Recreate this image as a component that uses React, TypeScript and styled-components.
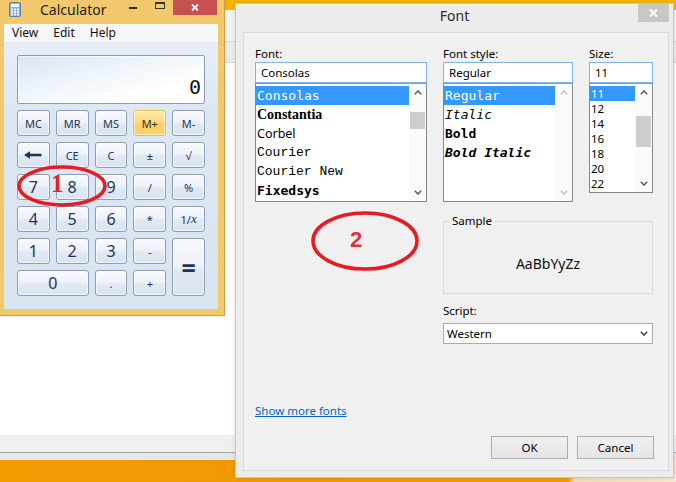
import React from "react";
import styled, { createGlobalStyle } from "styled-components";

const GlobalStyle = createGlobalStyle`
  html, body { margin: 0; padding: 0; }
  body {
    width: 676px; height: 482px; overflow: hidden; background: #fff;
    font-family: "Noto Sans", "Segoe UI", sans-serif;
  }
  * { box-sizing: border-box; }
`;

const UI = `"Noto Sans", "Open Sans", sans-serif`;
const MONO = `"DejaVu Sans Mono", "Liberation Mono", monospace`;

/* ---------- desktop & back window ---------- */
const Desktop = styled.div`
  position: relative;
  width: 676px;
  height: 482px;
  overflow: hidden;
  display: flex;
  flex-direction: column;
`;
const BackWindow = styled.div`
  flex: 1;
  display: flex;
  flex-direction: column;
  background: #fff;
`;
const BackTitle = styled.div`
  height: 10px;
  background: #f8b500;
`;
const BackRibbon = styled.div<{ $h: number; $bg: string }>`
  height: ${(p) => p.$h}px;
  background: ${(p) => p.$bg};
  border-bottom: 1px solid #d8d8d8;
`;
const BackContent = styled.div`
  flex: 1;
  background: #fff;
`;
const BackStatus = styled.div`
  height: 18px;
  background: #f0f0f0;
  border-bottom: 1px solid #a3a3a3;
`;
const BackFooter = styled.div`
  height: 7px;
  background: #e6e6e6;
`;
const Taskbar = styled.div`
  height: 22px;
  background: linear-gradient(90deg, #f29a00 0%, #f09800 84%, #f2dcb6 85%, #f6e8d0 100%);
`;

/* ---------- calculator ---------- */
const CalcWindow = styled.div`
  position: absolute;
  left: 0;
  top: 0;
  width: 225px;
  height: 316px;
  background: #f1c86b;
  border-right: 1px solid #c9a24e;
  border-bottom: 1px solid #c9a24e;
  display: flex;
  flex-direction: column;
  box-shadow: 1px 1px 3px rgba(0, 0, 0, 0.1);
`;
const CalcTitleBar = styled.div`
  height: 24px;
  flex-shrink: 0;
  display: flex;
  align-items: flex-start;
`;
const AppIcon = styled.svg`
  margin: 2px 0 0 9px;
  flex-shrink: 0;
`;
const CalcTitle = styled.div`
  margin-left: 19px;
  font: 14px/20px ${UI};
  color: #1e1e1e;
`;
const WinControls = styled.div`
  margin-left: auto;
  margin-right: 7px;
  display: flex;
  align-items: flex-start;
`;
const MinButton = styled.div`
  width: 22px;
  height: 15px;
  margin-right: 4px;
  display: flex;
  justify-content: center;
  padding-top: 7px;
`;
const MinGlyph = styled.div`
  width: 8px;
  height: 2px;
  background: #2a2a2a;
`;
const MaxButton = styled.div`
  width: 24px;
  height: 15px;
  margin-right: 1px;
  display: flex;
  justify-content: center;
  padding-top: 2px;
`;
const MaxGlyph = styled.div`
  width: 10px;
  height: 7px;
  border: 1px solid #333;
  border-top-width: 2px;
`;
const CloseButton = styled.div<{ $w: number; $h: number; $bg: string }>`
  width: ${(p) => p.$w}px;
  height: ${(p) => p.$h}px;
  background: ${(p) => p.$bg};
  display: flex;
  align-items: center;
  justify-content: center;
`;
const CalcInner = styled.div`
  flex: 1;
  margin: 0 6px 6px 4px;
  display: flex;
  flex-direction: column;
`;
const MenuBar = styled.div`
  height: 19px;
  flex-shrink: 0;
  display: flex;
  align-items: center;
  gap: 15px;
  padding-left: 8px;
  background: #f6f7f9;
  border-bottom: 1px solid #e2e7ee;
  font: 12px/18px ${UI};
  color: #111;
`;
const MenuItem = styled.span``;
const CalcBody = styled.div`
  flex: 1;
  padding: 12px 13px 13px 13px;
  display: flex;
  flex-direction: column;
  gap: 6px;
  background: linear-gradient(180deg, #e8eef7 0%, #dde7f2 25%, #d9e4f1 100%);
`;
const Display = styled.div`
  height: 49px;
  border: 1px solid #8d9bb0;
  border-radius: 2px;
  background: linear-gradient(165deg, #d9e5f3 0%, #eef4fa 40%, #ffffff 75%);
  box-shadow: inset 0 0 0 1px rgba(255, 255, 255, 0.6);
  display: flex;
  align-items: flex-end;
  justify-content: flex-end;
  padding: 0 3px 6px 0;
  font: 20px/20px ${MONO};
  color: #111;
`;
const KeyGrid = styled.div`
  display: grid;
  grid-template-columns: repeat(5, 1fr);
  grid-auto-rows: 26px;
  gap: 6px;
`;
const Key = styled.div<{ $digit?: boolean; $hot?: boolean; $wide?: boolean; $tall?: boolean }>`
  grid-column: ${(p) => (p.$wide ? "span 2" : "auto")};
  grid-row: ${(p) => (p.$tall ? "span 2" : "auto")};
  border: 1px solid ${(p) => (p.$hot ? "#e6c24c" : "#8d9db3")};
  border-radius: 3px;
  background: ${(p) =>
    p.$hot
      ? "linear-gradient(180deg, #fde9ad 0%, #fcd97e 45%, #fbcf63 55%, #fbd36c 100%)"
      : "linear-gradient(180deg, #f6f9fc 0%, #eef3f9 45%, #e0e8f2 55%, #dbe4ef 100%)"};
  box-shadow: inset 0 0 0 1px rgba(255, 255, 255, 0.55);
  display: flex;
  align-items: center;
  justify-content: center;
  font-family: ${UI};
  font-size: ${(p) => (p.$digit ? "16px" : "11px")};
  color: ${(p) => (p.$hot ? "#3a3020" : "#1e3656")};
`;
const EqualsGlyph = styled.span`
  font: bold 25px/24px ${UI};
  color: #1e3656;
`;
const Ital = styled.span`
  font-family: "Liberation Serif", serif;
  font-style: italic;
  font-size: 13px;
`;

/* ---------- font dialog ---------- */
const FontDialog = styled.div`
  position: absolute;
  left: 235px;
  top: 3px;
  width: 439px;
  height: 475px;
  background: #ececec;
  border: 1px solid #c6c6c6;
  box-shadow: 0 0 5px rgba(0, 0, 0, 0.12);
  display: flex;
  flex-direction: column;
  font-family: ${UI};
`;
const DialogTitleBar = styled.div`
  height: 28px;
  flex-shrink: 0;
  display: grid;
  grid-template-columns: 1fr auto 1fr;
  align-items: start;
`;
const DialogTitle = styled.div`
  grid-column: 2;
  font: 14px/23px ${UI};
  color: #2a2a2a;
`;
const DialogClose = styled(CloseButton)`
  grid-column: 3;
  justify-self: end;
  margin: -1px 4px 0 0;
`;
const Panel = styled.div`
  flex: 1;
  margin: 0 4px 6px 7px;
  background: #f0f0f0;
  border: 1px solid #dadada;
  padding: 13px 14px 11px 11px;
  display: flex;
  flex-direction: column;
`;
const FieldGrid = styled.div`
  display: grid;
  grid-template-columns: 172px 130px 64px;
  column-gap: 16px;
  align-items: start;
`;
const Label = styled.div<{ $span?: boolean; $mt?: number }>`
  grid-column: ${(p) => (p.$span ? "2 / 4" : "auto")};
  margin-top: ${(p) => p.$mt ?? 0}px;
  font-size: 11.5px;
  line-height: 16px;
  color: #000;
`;
const TextInput = styled.div`
  height: 21px;
  border: 1px solid #7eb4ea;
  background: #fff;
  padding-left: 5px;
  display: flex;
  align-items: center;
  font-size: 11.5px;
  color: #000;
`;
const ListBox = styled.div<{ $h: number }>`
  height: ${(p) => p.$h}px;
  border: 1px solid #828790;
  border-top-color: #9a9a9a;
  background: #fff;
  display: flex;
`;
const ListItems = styled.div`
  flex: 1;
  min-width: 0;
  padding-top: 2px;
  overflow: hidden;
`;
const ListItem = styled.div<{
  $sel?: boolean;
  $h: number;
  $family: string;
  $size: number;
  $bold?: boolean;
  $italic?: boolean;
}>`
  height: ${(p) => p.$h}px;
  line-height: ${(p) => p.$h}px;
  padding-left: 1px;
  white-space: nowrap;
  font-family: ${(p) => p.$family};
  font-size: ${(p) => p.$size}px;
  font-weight: ${(p) => (p.$bold ? 700 : 400)};
  font-style: ${(p) => (p.$italic ? "italic" : "normal")};
  color: ${(p) => (p.$sel ? "#fff" : "#000")};
  background: ${(p) => (p.$sel ? "#3399ff" : "transparent")};
`;
const ScrollBar = styled.div`
  width: 17px;
  flex-shrink: 0;
  display: flex;
  flex-direction: column;
  background: #fafafa;
`;
const ScrollArrow = styled.div`
  height: 17px;
  flex-shrink: 0;
  display: flex;
  align-items: center;
  justify-content: center;
`;
const Track = styled.div`
  flex: 1;
`;
const Thumb = styled.div<{ $top: number; $h: number }>`
  margin: ${(p) => p.$top}px 1px 0 1px;
  height: ${(p) => p.$h}px;
  background: #cdcdcd;
`;
const SampleGroup = styled.div`
  grid-column: 2 / 4;
  margin-top: 19px;
  height: 73px;
  position: relative;
  border: 1px solid #dcdcdc;
  padding-top: 11px;
  display: flex;
  align-items: center;
  justify-content: center;
`;
const Legend = styled.span`
  position: absolute;
  top: -9px;
  left: 6px;
  padding: 0 2px;
  background: #f0f0f0;
  font-size: 11.5px;
  line-height: 16px;
  color: #000;
`;
const SampleText = styled.div`
  font-size: 14px;
  color: #111;
`;
const Select = styled.div`
  grid-column: 2 / 4;
  margin-top: 4px;
  height: 21px;
  border: 1px solid #acacac;
  background: #fff;
  padding: 0 4px 0 3px;
  display: flex;
  align-items: center;
  justify-content: space-between;
  font-size: 11.5px;
  color: #000;
`;
const Link = styled.a`
  align-self: flex-start;
  margin-top: 59px;
  font-size: 11.5px;
  line-height: 16px;
  color: #0066cc;
  text-decoration: underline;
`;
const ButtonRow = styled.div`
  margin-top: auto;
  display: flex;
  justify-content: flex-end;
  gap: 9px;
`;
const DialogButton = styled.div`
  width: 77px;
  height: 23px;
  border: 1px solid #adadad;
  background: linear-gradient(180deg, #f0f0f0 0%, #e5e5e5 100%);
  display: flex;
  align-items: center;
  justify-content: center;
  font-size: 11.5px;
  color: #000;
`;

/* ---------- annotations ---------- */
const Ring = styled.svg<{ $x: number; $y: number }>`
  position: absolute;
  left: ${(p) => p.$x}px;
  top: ${(p) => p.$y}px;
  overflow: visible;
`;
const Mark = styled.div<{ $x: number; $y: number; $serif?: boolean }>`
  position: absolute;
  left: ${(p) => p.$x}px;
  top: ${(p) => p.$y}px;
  font-family: ${(p) => (p.$serif ? `"Liberation Serif", serif` : `"Liberation Sans", sans-serif`)};
  font-weight: 700;
  font-size: ${(p) => (p.$serif ? 25 : 22)}px;
  line-height: ${(p) => (p.$serif ? 24 : 22)}px;
  color: ${(p) => (p.$serif ? "#e0202a" : "#e5303c")};
`;

/* ---------- small drawings ---------- */
const Chevron = ({ up, color = "#606060" }: { up?: boolean; color?: string }) => (
  <svg width="8" height="5" viewBox="0 0 8 5">
    <polyline
      points={up ? "0.8,4.2 4,1 7.2,4.2" : "0.8,0.8 4,4 7.2,0.8"}
      fill="none"
      stroke={color}
      strokeWidth="1.6"
    />
  </svg>
);

const XGlyph = ({ size = 8 }: { size?: number }) => (
  <svg width={size} height={size - 1} viewBox="0 0 8 7">
    <path d="M1 0.5 L7 6.5 M7 0.5 L1 6.5" stroke="#fff" strokeWidth="1.8" fill="none" />
  </svg>
);

const BackArrow = () => (
  <svg width="18" height="8" viewBox="0 0 18 8">
    <path d="M4 4 H17.5" stroke="#1e3656" strokeWidth="2.6" />
    <polygon points="0,4 6,0.3 6,7.7" fill="#1e3656" />
  </svg>
);

const Scroll = ({
  thumb,
  disabled,
}: {
  thumb?: { top: number; h: number };
  disabled?: boolean;
}) => (
  <ScrollBar>
    <ScrollArrow>
      <Chevron up color={disabled ? "#c4c4c4" : "#606060"} />
    </ScrollArrow>
    <Track>{thumb && <Thumb $top={thumb.top} $h={thumb.h} />}</Track>
    <ScrollArrow>
      <Chevron color={disabled ? "#c4c4c4" : "#606060"} />
    </ScrollArrow>
  </ScrollBar>
);

const fonts = [
  { name: "Consolas", family: MONO, size: 13 },
  { name: "Constantia", family: `"Liberation Serif", serif`, size: 14, bold: true },
  { name: "Corbel", family: UI, size: 12.5 },
  { name: "Courier", family: `"Liberation Mono", monospace`, size: 13 },
  { name: "Courier New", family: `"Liberation Mono", monospace`, size: 13 },
  { name: "Fixedsys", family: MONO, size: 13, bold: true },
];
const styles = [
  { name: "Regular" },
  { name: "Italic", italic: true },
  { name: "Bold", bold: true },
  { name: "Bold Italic", bold: true, italic: true },
];
const sizes = ["11", "12", "14", "16", "18", "20", "22"];

type KeyDef = {
  label: React.ReactNode;
  digit?: boolean;
  hot?: boolean;
  wide?: boolean;
  tall?: boolean;
};
const keys: KeyDef[] = [
  { label: "MC" },
  { label: "MR" },
  { label: "MS" },
  { label: "M+", hot: true },
  { label: "M-" },
  { label: <BackArrow /> },
  { label: "CE" },
  { label: "C" },
  { label: "±" },
  { label: "√" },
  { label: "7", digit: true },
  { label: "8", digit: true },
  { label: "9", digit: true },
  { label: "/" },
  { label: "%" },
  { label: "4", digit: true },
  { label: "5", digit: true },
  { label: "6", digit: true },
  { label: "*" },
  {
    label: (
      <>
        1/<Ital>x</Ital>
      </>
    ),
  },
  { label: "1", digit: true },
  { label: "2", digit: true },
  { label: "3", digit: true },
  { label: "-" },
  { label: <EqualsGlyph>=</EqualsGlyph>, tall: true },
  { label: "0", digit: true, wide: true },
  { label: "." },
  { label: "+" },
];

export default function App() {
  return (
    <>
      <GlobalStyle />
      <Desktop>
        <BackWindow>
          <BackTitle />
          <BackRibbon $h={32} $bg="#f4f4f4" />
          <BackRibbon $h={21} $bg="#ededed" />
          <BackContent />
          <BackStatus />
          <BackFooter />
        </BackWindow>
        <Taskbar />

        <CalcWindow>
          <CalcTitleBar>
            <AppIcon width="12" height="15" viewBox="0 0 12 15">
              <rect x="0.5" y="0.5" width="11" height="14" rx="1" fill="#8eafd3" stroke="#5a7ea6" />
              <rect x="2" y="2" width="8" height="3" fill="#eef5fc" />
              {[0, 1, 2].map((r) =>
                [0, 1, 2].map((c) => (
                  <rect key={`${r}-${c}`} x={2 + c * 3} y={6.5 + r * 2.6} width="2" height="1.8" fill="#f4f8fc" />
                ))
              )}
            </AppIcon>
            <CalcTitle>Calculator</CalcTitle>
            <WinControls>
              <MinButton>
                <MinGlyph />
              </MinButton>
              <MaxButton>
                <MaxGlyph />
              </MaxButton>
              <CloseButton $w={44} $h={15} $bg="#c75050">
                <XGlyph />
              </CloseButton>
            </WinControls>
          </CalcTitleBar>
          <CalcInner>
            <MenuBar>
              <MenuItem>View</MenuItem>
              <MenuItem>Edit</MenuItem>
              <MenuItem>Help</MenuItem>
            </MenuBar>
            <CalcBody>
              <Display>0</Display>
              <KeyGrid>
                {keys.map((k, i) => (
                  <Key key={i} $digit={k.digit} $hot={k.hot} $wide={k.wide} $tall={k.tall}>
                    {k.label}
                  </Key>
                ))}
              </KeyGrid>
            </CalcBody>
          </CalcInner>
        </CalcWindow>

        <FontDialog>
          <DialogTitleBar>
            <DialogTitle>Font</DialogTitle>
            <DialogClose $w={31} $h={19} $bg="#c7c7c7">
              <XGlyph size={9} />
            </DialogClose>
          </DialogTitleBar>
          <Panel>
            <FieldGrid>
              <Label>Font:</Label>
              <Label>Font style:</Label>
              <Label>Size:</Label>

              <TextInput>Consolas</TextInput>
              <TextInput>Regular</TextInput>
              <TextInput>11</TextInput>

              <ListBox $h={119}>
                <ListItems>
                  {fonts.map((f, i) => (
                    <ListItem
                      key={f.name}
                      $sel={i === 0}
                      $h={19}
                      $family={f.family}
                      $size={f.size}
                      $bold={f.bold}
                    >
                      {f.name}
                    </ListItem>
                  ))}
                </ListItems>
                <Scroll thumb={{ top: 11, h: 17 }} />
              </ListBox>
              <ListBox $h={119}>
                <ListItems>
                  {styles.map((s, i) => (
                    <ListItem
                      key={s.name}
                      $sel={i === 0}
                      $h={19}
                      $family={MONO}
                      $size={13}
                      $bold={s.bold}
                      $italic={s.italic}
                    >
                      {s.name}
                    </ListItem>
                  ))}
                </ListItems>
                <Scroll disabled />
              </ListBox>
              <ListBox $h={110}>
                <ListItems>
                  {sizes.map((s, i) => (
                    <ListItem key={s} $sel={i === 0} $h={15} $family={UI} $size={11.5}>
                      {s}
                    </ListItem>
                  ))}
                </ListItems>
                <Scroll thumb={{ top: 15, h: 31 }} />
              </ListBox>

              <SampleGroup>
                <Legend>Sample</Legend>
                <SampleText>AaBbYyZz</SampleText>
              </SampleGroup>
              <Label $span $mt={9}>
                Script:
              </Label>
              <Select>
                <span>Western</span>
                <Chevron color="#444" />
              </Select>
            </FieldGrid>
            <Link>Show more fonts</Link>
            <ButtonRow>
              <DialogButton>OK</DialogButton>
              <DialogButton>Cancel</DialogButton>
            </ButtonRow>
          </Panel>
        </FontDialog>

        <Ring $x={16} $y={165} width="92" height="42" viewBox="0 0 92 42">
          <ellipse cx="46" cy="21" rx="43" ry="19" fill="none" stroke="#e61b23" strokeWidth="3.6" />
        </Ring>
        <Mark $x={51} $y={172} $serif>
          1
        </Mark>
        <Ring $x={311} $y={211} width="108" height="60" viewBox="0 0 108 60">
          <ellipse cx="54" cy="30" rx="52" ry="28" fill="none" stroke="#e61b23" strokeWidth="3.6" />
        </Ring>
        <Mark $x={350} $y={229}>2</Mark>
      </Desktop>
    </>
  );
}
